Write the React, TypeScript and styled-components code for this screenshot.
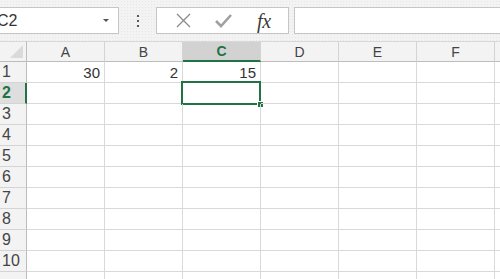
import React from "react";
import styled, { createGlobalStyle, css } from "styled-components";

const GREEN = "#217346";

const GlobalStyle = createGlobalStyle`
  html, body {
    margin: 0;
    padding: 0;
    background: #ffffff;
    overflow: hidden;
  }
  body {
    font-family: "Liberation Sans", Arial, sans-serif;
  }
`;

const Page = styled.div`
  width: 500px;
  height: 279px;
  overflow: hidden;
  background: #ffffff;
`;

const Toolbar = styled.div`
  height: 41px;
  box-sizing: border-box;
  padding-top: 7px;
  display: flex;
  align-items: flex-start;
  background-color: #f3f3f3;
  background-image: radial-gradient(#e6e6e6 0.6px, transparent 0.7px);
  background-size: 3px 3px;
`;

const NameBox = styled.div`
  margin-left: -22px;
  width: 141px;
  height: 27px;
  box-sizing: border-box;
  border: 1px solid #c6c6c6;
  background: #ffffff;
  display: flex;
  align-items: center;
  justify-content: space-between;
  padding: 0 9px 0 18px;
  font-size: 16px;
  color: #333333;
`;

const DropArrow = styled.span`
  width: 0;
  height: 0;
  border-left: 3px solid transparent;
  border-right: 3px solid transparent;
  border-top: 3px solid #555555;
`;

const Grip = styled.div`
  width: 37px;
  height: 27px;
  display: flex;
  flex-direction: column;
  align-items: center;
  justify-content: center;
  gap: 3px;
`;

const GripDot = styled.span`
  width: 2px;
  height: 2px;
  background: #5a5a5a;
`;

const FormulaButtons = styled.div`
  width: 133px;
  height: 27px;
  box-sizing: border-box;
  border: 1px solid #c6c6c6;
  background: #ffffff;
  display: flex;
  align-items: center;
  justify-content: space-around;
  padding: 0 4px 0 6px;
`;

const IconSlot = styled.span`
  width: 30px;
  display: flex;
  align-items: center;
  justify-content: center;
`;

const Fx = styled.span`
  font-family: "Liberation Serif", "Times New Roman", serif;
  font-style: italic;
  font-size: 20px;
  color: #3c3c3c;
  letter-spacing: -0.5px;
  line-height: 1;
`;

const FormulaInput = styled.div`
  margin-left: 5px;
  flex: 1;
  height: 27px;
  box-sizing: border-box;
  border: 1px solid #c6c6c6;
  border-right: none;
  background: #ffffff;
`;

const Sheet = styled.div`
  display: grid;
  grid-template-columns: 27px repeat(7, 78px);
  grid-auto-rows: 21px;
`;

const Corner = styled.div`
  box-sizing: border-box;
  border-top: 1px solid #d8d8d8;
  border-right: 1px solid #bdbdbd;
  border-bottom: 1px solid #bdbdbd;
  background: #f3f3f3;
  position: relative;
  &::after {
    content: "";
    position: absolute;
    right: 3px;
    bottom: 3px;
    width: 0;
    height: 0;
    border-left: 13px solid transparent;
    border-bottom: 13px solid #dadada;
  }
`;

const ColHead = styled.div<{ $active?: boolean }>`
  box-sizing: border-box;
  border-top: 1px solid #d8d8d8;
  border-right: 1px solid #d4d4d4;
  border-bottom: 1px solid #bdbdbd;
  background: #f3f3f3;
  display: flex;
  align-items: center;
  justify-content: center;
  font-size: 14px;
  color: #444444;
  ${(p) =>
    p.$active &&
    css`
      background: #d2d2d2;
      border-bottom: 2px solid ${GREEN};
      color: ${GREEN};
      font-weight: bold;
    `}
`;

const RowHead = styled.div<{ $active?: boolean }>`
  box-sizing: border-box;
  border-right: 1px solid #bdbdbd;
  border-bottom: 1px solid #d4d4d4;
  background: #f3f3f3;
  display: flex;
  align-items: center;
  padding-left: 2px;
  font-size: 16px;
  color: #444444;
  ${(p) =>
    p.$active &&
    css`
      background: #dedede;
      border-right: 2px solid ${GREEN};
      color: ${GREEN};
      font-weight: bold;
    `}
`;

const Cell = styled.div<{ $selected?: boolean }>`
  box-sizing: border-box;
  border-right: 1px solid #d9d9d9;
  border-bottom: 1px solid #d9d9d9;
  display: flex;
  align-items: center;
  justify-content: flex-end;
  padding-right: 4px;
  font-size: 15px;
  color: #333333;
  position: relative;
  ${(p) =>
    p.$selected &&
    css`
      &::before {
        content: "";
        position: absolute;
        left: -2px;
        top: -2px;
        right: -1px;
        bottom: -2px;
        border: 2px solid ${GREEN};
      }
      &::after {
        content: "";
        position: absolute;
        right: -3px;
        bottom: -4px;
        width: 5px;
        height: 5px;
        background: ${GREEN};
        box-shadow: 0 0 0 1px #ffffff;
      }
    `}
`;

const columns = ["A", "B", "C", "D", "E", "F", "G"];
const values: Record<string, string> = { "1A": "30", "1B": "2", "1C": "15" };

export default function App() {
  return (
    <Page>
      <GlobalStyle />
      <Toolbar>
        <NameBox>
          <span>C2</span>
          <DropArrow />
        </NameBox>
        <Grip>
          <GripDot />
          <GripDot />
          <GripDot />
        </Grip>
        <FormulaButtons>
          <IconSlot>
            <svg width="15" height="15" viewBox="0 0 15 15">
              <path d="M1 1 L14 14 M14 1 L1 14" stroke="#8a8a8a" strokeWidth="1.3" fill="none" />
            </svg>
          </IconSlot>
          <IconSlot>
            <svg width="17" height="14" viewBox="0 0 17 14">
              <path d="M1 7 L6 12 L16 1" stroke="#a0a0a0" strokeWidth="2.6" fill="none" />
            </svg>
          </IconSlot>
          <IconSlot>
            <Fx>fx</Fx>
          </IconSlot>
        </FormulaButtons>
        <FormulaInput />
      </Toolbar>
      <Sheet>
        <Corner />
        {columns.map((c) => (
          <ColHead key={c} $active={c === "C"}>
            {c === "G" ? "" : c}
          </ColHead>
        ))}
        {Array.from({ length: 11 }, (_, i) => i + 1).map((r) => (
          <React.Fragment key={r}>
            <RowHead $active={r === 2}>{r <= 10 ? r : ""}</RowHead>
            {columns.map((c) => (
              <Cell key={c} $selected={r === 2 && c === "C"}>
                {values[`${r}${c}`] ?? ""}
              </Cell>
            ))}
          </React.Fragment>
        ))}
      </Sheet>
    </Page>
  );
}
